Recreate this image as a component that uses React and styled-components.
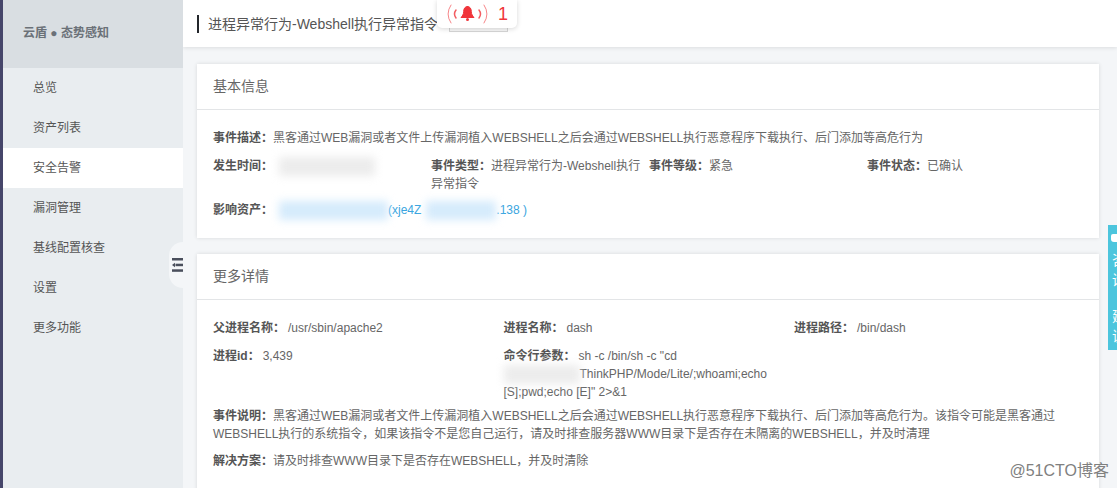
import React from "react";
import styled, { createGlobalStyle } from "styled-components";

const Global = createGlobalStyle`
  html, body { margin: 0; padding: 0; height: 100%; overflow: hidden; }
  body { font-family: "Liberation Sans", "Noto Sans CJK SC", sans-serif; }
`;

const Page = styled.div`
  position: relative;
  width: 1117px;
  height: 488px;
  display: flex;
  overflow: hidden;
  background: #f4f6f8;
  color: #666;
  font-size: 12px;
`;

const Side = styled.aside`
  position: relative;
  width: 180px;
  flex: none;
  border-left: 3px solid #46466a;
  background: #e9edf0;
`;

const Logo = styled.div`
  height: 63px;
  padding: 0 0 5px 20px;
  display: flex;
  align-items: center;
  background: #d9dee2;
  color: #6b7178;
  font-weight: bold;
`;

const Menu = styled.ul`
  list-style: none;
  margin: 0;
  padding: 0;
`;

const MenuItem = styled.li`
  height: 40px;
  line-height: 40px;
  padding-left: 30px;
  color: #555;
  background: ${(p) => (p.$active ? "#fff" : "transparent")};
`;

const Handle = styled.div`
  position: absolute;
  right: 0;
  top: 242px;
  width: 14px;
  height: 46px;
  border-radius: 23px 0 0 23px;
  background: #f4f6f8;
  display: flex;
  align-items: center;
  justify-content: flex-end;
`;

const Main = styled.main`
  flex: 1;
  min-width: 0;
`;

const Head = styled.header`
  height: 47px;
  padding-left: 14px;
  display: flex;
  align-items: center;
  background: #fff;
  box-shadow: 0 1px 4px rgba(0, 0, 0, 0.1);
`;

const HeadTitle = styled.h1`
  margin: 0;
  padding-left: 9px;
  border-left: 2px solid #23262b;
  font-size: 14px;
  font-weight: normal;
  line-height: 18px;
  color: #555;
`;

const GhostButton = styled.div`
  position: absolute;
  left: 449px;
  top: 20px;
  width: 57px;
  height: 11px;
  border: 1px solid #d5d5d5;
  border-top: 0;
  background: #f7f7f7;
`;

const Alarm = styled.div`
  position: absolute;
  left: 437px;
  top: 0;
  width: 80px;
  height: 28px;
  padding-left: 9px;
  box-sizing: border-box;
  display: flex;
  align-items: center;
  gap: 10px;
  background: #fff;
  border-radius: 0 0 5px 5px;
  box-shadow: 0 1px 5px rgba(0, 0, 0, 0.16);
  color: #f0353b;
  font-size: 18px;
`;

const Content = styled.div`
  padding: 17px 18px 0 14px;
  display: flex;
  flex-direction: column;
  gap: 16px;
`;

const Card = styled.section`
  background: #fff;
  box-shadow: 0 0 4px rgba(0, 0, 0, 0.12);
`;

const CardHead = styled.h2`
  margin: 0;
  height: 45px;
  padding-left: 16px;
  line-height: 44px;
  font-size: 14px;
  font-weight: normal;
  color: #666;
  border-bottom: 1px solid #e3e5e7;
`;

const Body = styled.div`
  padding: 19px 16px ${(p) => p.$bottom || "21px"};
`;

const Row = styled.div`
  display: grid;
  grid-template-columns: repeat(${(p) => p.$cols}, ${(p) => p.$width});
  margin-bottom: ${(p) => p.$gap || "10px"};
  line-height: 18px;
`;

const Label = styled.b`
  color: #555;
  font-weight: bold;
`;

const DetailLabel = styled(Label)`
  margin-right: 3px;
`;

const Para = styled.p`
  margin: 0 0 ${(p) => p.$gap || "9px"};
  line-height: 18px;
`;

const Link = styled.span`
  color: #3aa5e0;
`;

const Redact = styled.span`
  display: inline-block;
  width: ${(p) => p.$w}px;
  height: 19px;
  vertical-align: middle;
  background: ${(p) => p.$color || "#ececec"};
  filter: blur(4px);
  margin: -5px 0 -5px ${(p) => p.$left || "0"};
`;

const Tab = styled.div`
  position: absolute;
  left: 1108px;
  top: 225px;
  width: 18px;
  height: 125px;
  padding: 9px 0 0 4px;
  box-sizing: border-box;
  background: #4cc5dd;
  color: #fff;
  font-size: 14px;
  line-height: 20px;
`;

const TabIcon = styled.div`
  width: 15px;
  height: 8px;
  margin: 0 0 8px -1px;
  border-radius: 2px 0 0 3px;
  background: #fff;
`;

const TabGap = styled.div`
  height: 16px;
`;

const Watermark = styled.div`
  position: absolute;
  right: 8px;
  top: 463px;
  color: #808080;
  font-size: 16px;
  line-height: 16px;
`;

const BellIcon = () => (
  <svg width="42" height="20" viewBox="0 0 42 20" fill="none" stroke="#f0353b" strokeLinecap="round">
    <path d="M5 1 Q-1 10 5 19M38 1 Q44 10 38 19" opacity="0.6" />
    <path d="M10 6 Q7 10 10 14M33 6 Q36 10 33 14" strokeWidth="1.500" opacity="0.8" />
    <path
      d="M21.500 2.500c-2.800 0-3.800 2.500-3.800 5 0 3-1.500 4.500-2.700 6h13c-1.200-1.500-2.700-3-2.700-6 0-2.500-1-5-3.800-5z"
      fill="#f0353b"
    />
    <circle cx="21.500" cy="15.500" r="1.500" fill="#f0353b" stroke="none" />
  </svg>
);

const CollapseIcon = () => (
  <svg width="11" height="14" viewBox="0 0 11 14" fill="#4a4f5c">
    <rect x="0" y="0" width="11" height="2.500" />
    <rect x="3.500" y="5.700" width="7.500" height="2.500" />
    <path d="M0 7 L3 4.800 V9.200 Z" />
    <rect x="0" y="11.300" width="11" height="2.500" />
  </svg>
);

const menu = ["总览", "资产列表", "安全告警", "漏洞管理", "基线配置核查", "设置", "更多功能"];

export default function App() {
  return (
    <Page>
      <Global />
      <Side>
        <Logo>云盾 ● 态势感知</Logo>
        <Menu>
          {menu.map((m) => (
            <MenuItem key={m} $active={m === "安全告警"}>
              {m}
            </MenuItem>
          ))}
        </Menu>
        <Handle>
          <CollapseIcon />
        </Handle>
      </Side>
      <Main>
        <Head>
          <HeadTitle>进程异常行为-Webshell执行异常指令</HeadTitle>
        </Head>
        <Content>
          <Card>
            <CardHead>基本信息</CardHead>
            <Body>
              <Para $gap="10px">
                <Label>事件描述：</Label>黑客通过WEB漏洞或者文件上传漏洞植入WEBSHELL之后会通过WEBSHELL执行恶意程序下载执行、后门添加等高危行为
              </Para>
              <Row $cols={4} $width="218px" $gap="7px">
                <div>
                  <Label>发生时间：</Label>
                  <Redact $w={96} $left="6px" />
                </div>
                <div>
                  <Label>事件类型：</Label>进程异常行为-Webshell执行异常指令
                </div>
                <div>
                  <Label>事件等级：</Label>紧急
                </div>
                <div>
                  <Label>事件状态：</Label>已确认
                </div>
              </Row>
              <div>
                <Label>影响资产：</Label>
                <Redact $w={109} $color="#d5ebfc" $left="6px" />
                <Link>(xje4Z</Link>
                <Redact $w={70} $color="#d5ebfc" $left="5px" />
                <Link>.138 )</Link>
              </div>
            </Body>
          </Card>
          <Card>
            <CardHead>更多详情</CardHead>
            <Body $bottom="30px">
              <Row $cols={3} $width="290.500px" $gap="10px">
                <div>
                  <DetailLabel>父进程名称：</DetailLabel>/usr/sbin/apache2
                </div>
                <div>
                  <DetailLabel>进程名称：</DetailLabel>dash
                </div>
                <div>
                  <DetailLabel>进程路径：</DetailLabel>/bin/dash
                </div>
              </Row>
              <Row $cols={3} $width="290.500px" $gap="6px">
                <div>
                  <DetailLabel>进程id：</DetailLabel>3,439
                </div>
                <div>
                  <DetailLabel>命令行参数：</DetailLabel>sh -c /bin/sh -c "cd
                  <br />
                  <Redact $w={76} />
                  ThinkPHP/Mode/Lite/;whoami;echo
                  <br />
                  [S];pwd;echo [E]" 2&gt;&amp;1
                </div>
              </Row>
              <Para $gap="9px">
                <Label>事件说明：</Label>黑客通过WEB漏洞或者文件上传漏洞植入WEBSHELL之后会通过WEBSHELL执行恶意程序下载执行、后门添加等高危行为。该指令可能是黑客通过WEBSHELL执行的系统指令，如果该指令不是您自己运行，请及时排查服务器WWW目录下是否存在未隔离的WEBSHELL，并及时清理
              </Para>
              <Para>
                <Label>解决方案：</Label>请及时排查WWW目录下是否存在WEBSHELL，并及时清除
              </Para>
            </Body>
          </Card>
        </Content>
      </Main>
      <GhostButton />
      <Alarm>
        <BellIcon />1
      </Alarm>
      <Tab>
        <TabIcon />
        咨<br />询
        <TabGap />
        建<br />议
      </Tab>
      <Watermark>@51CTO博客</Watermark>
    </Page>
  );
}
